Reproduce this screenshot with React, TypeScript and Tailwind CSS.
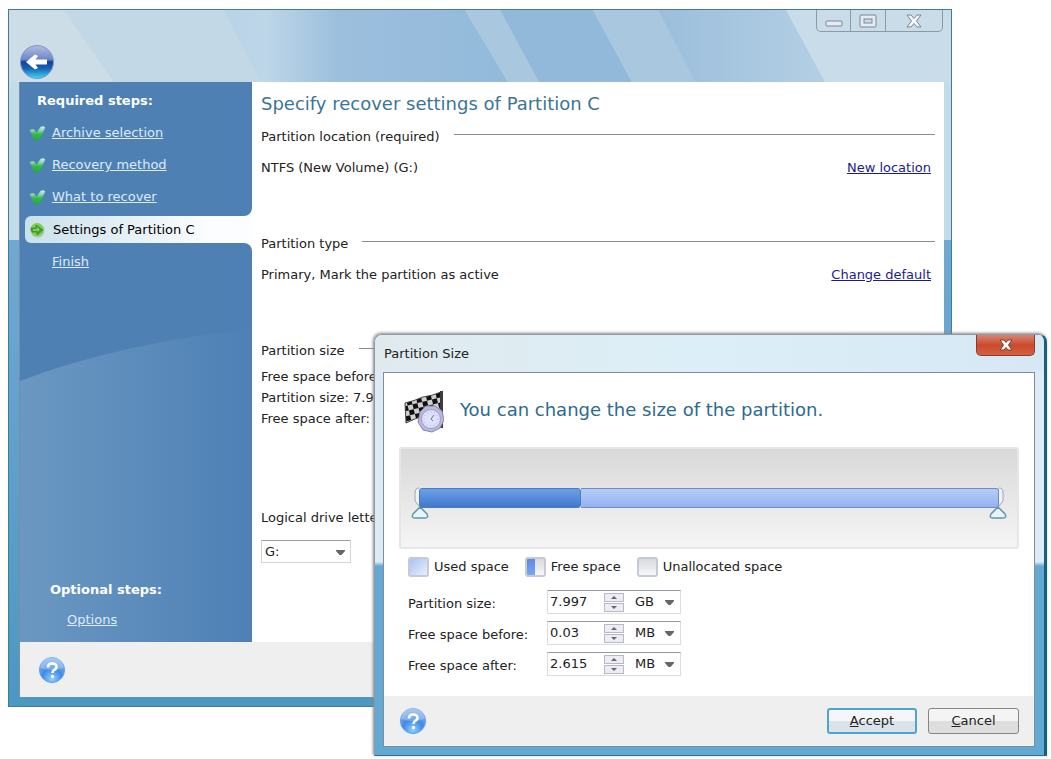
import { FC, ReactNode, useState } from 'react'

const steps = ['Archive selection', 'Recovery method', 'What to recover']

const CheckIcon = () => (
  <svg viewBox="0 0 17 17" className="h-[17px] w-[17px] shrink-0" aria-hidden="true">
    <defs>
      <linearGradient id="check" x1="0" y1="0" x2="0" y2="1">
        <stop offset="0" stopColor="#d3efe6" />
        <stop offset="0.300" stopColor="#8ed6ae" />
        <stop offset="0.550" stopColor="#35bb45" />
        <stop offset="1" stopColor="#2aa53c" />
      </linearGradient>
    </defs>
    <path d="M1 5.500 Q2.500 3.500 5 4.500 L7.500 8 L11.500 2 Q14 0.500 16 2 Q16 4.500 14.500 6 L12.500 11.500 Q11 15.500 8 15.500 Q5 15.500 4 12 L2.500 8 Q1 7 1 5.500 Z" fill="url(#check)" />
  </svg>
)

const CurrentIcon = () => (
  <svg viewBox="0 0 16 16" className="h-4 w-4 shrink-0" aria-hidden="true">
    <circle cx="8.500" cy="8.500" r="7" fill="#a9c9a2" />
    <circle cx="8" cy="7.500" r="6.500" fill="#7ccf52" />
    <path d="M2 6 H7 V3 L14 8 L8 13 V10 H3 Z" fill="#46a431" stroke="#3a8a2c" strokeWidth="0.8" />
    <path d="M4 8 H10 L8 5.500" fill="none" stroke="#b6ee92" />
  </svg>
)

const HelpIcon = () => (
  <svg viewBox="0 0 28 28" className="h-7 w-7" aria-hidden="true">
    <defs>
      <radialGradient id="help" cx="50%" cy="85%" r="80%">
        <stop offset="0" stopColor="#8fd0ff" />
        <stop offset="0.500" stopColor="#3f8be6" />
        <stop offset="1" stopColor="#8db4ea" />
      </radialGradient>
    </defs>
    <circle cx="14" cy="14" r="13.500" fill="#d5e9fb" />
    <circle cx="14" cy="14" r="12.500" fill="url(#help)" stroke="#6a9ede" />
    <path d="M2.500 12 A11.500 11.500 0 0 1 25.500 12 Q14 16 2.500 12 Z" fill="#fff" fillOpacity="0.25" />
    <path d="M10 11.500 Q10 7.500 14 7.500 Q18.500 7.500 18.500 11 Q18.500 13 16 14 Q14.500 15 14.500 17" fill="none" stroke="#fff" strokeWidth="2.600" />
    <circle cx="14.500" cy="20.500" r="1.700" fill="#fff" />
  </svg>
)

const BackIcon = () => (
  <svg viewBox="0 0 36 36" className="h-9 w-9" aria-hidden="true">
    <defs>
      <linearGradient id="back" x1="0" y1="0" x2="0" y2="1">
        <stop offset="0" stopColor="#b4bce0" />
        <stop offset="0.420" stopColor="#6d88c8" />
        <stop offset="0.500" stopColor="#123f94" />
        <stop offset="0.700" stopColor="#1765b8" />
        <stop offset="1" stopColor="#3fd8f5" />
      </linearGradient>
    </defs>
    <circle cx="18" cy="18" r="16.500" fill="url(#back)" stroke="#7f97c4" />
    <path d="M7 18 L16 10.500 L19 12 L16.500 15.500 H28 V20.500 H16.500 L19 24 L16 25.500 Z" fill="#fff" />
  </svg>
)

const FlagIcon = () => (
  <svg viewBox="0 0 40 42" className="h-[42px] w-10 shrink-0" aria-hidden="true">
    <defs>
      <pattern id="checks" width="10" height="10" patternUnits="userSpaceOnUse" patternTransform="rotate(-14)">
        <rect width="10" height="10" fill="#cfcfcf" />
        <rect width="5" height="5" fill="#111" />
        <rect x="5" y="5" width="5" height="5" fill="#111" />
      </pattern>
    </defs>
    <path d="M1 12 Q10 10 19 6 Q28 5 37 1 V20 Q28 24 19 25 Q10 28 2 32 Z" fill="url(#checks)" stroke="#444" />
    <path d="M36 0 H39 V37 H36 Z" fill="#3a3a40" />
    <path d="M16 21 L22 15 H31 L38 20 L40 29 L36 37 L28 41 L19 39 L14 31 Z" fill="#b9b9dd" stroke="#8585ac" />
    <circle cx="27" cy="28" r="9.500" fill="#dfe0fa" stroke="#9d9dc8" />
    <circle cx="27" cy="28" r="7" fill="none" stroke="#a9a9cf" strokeDasharray="1 2.600" />
    <path d="M27 28 L30 24 M27 28 L29 30" stroke="#6c6cb0" fill="none" />
  </svg>
)

const DownArrow: FC<{ className: string }> = ({ className }) => (
  <svg viewBox="0 0 9 5" className={`pointer-events-none absolute h-[5px] w-[9px] ${className}`} aria-hidden="true">
    <path d="M0 0 H9 V1 L5.500 5 H3.500 L0 1 Z" fill="#666" />
  </svg>
)

const SectionTitle: FC<{ children: ReactNode }> = ({ children }) => (
  <div className="flex h-6 items-center gap-[14px] pr-[9px]">
    <h2 className="pt-px">{children}</h2>
    <div className="mb-1 h-px flex-1 bg-[#8c8c8c]" />
  </div>
)

const SectionRow: FC<{ text: string, link: string }> = ({ text, link }) => (
  <div className="flex h-6 items-center justify-between pr-[13px]">
    <p>{text}</p>
    <a href="#" className="text-[#1c1c8c] underline">{link}</a>
  </div>
)

type AmountFieldProps = {
  id: string,
  label: string,
  value: string,
  unit: string,
  autoFocus?: boolean,
}

const AmountField: FC<AmountFieldProps> = ({ id, label, value, unit, autoFocus }) => {
  const [amount, setAmount] = useState(value)
  const change = (step: number) => setAmount((Number(amount) + step).toFixed(3))

  return (
    <div className="flex items-center">
      <label htmlFor={id} className="w-[139px] pt-1">{label}</label>
      <div className="flex h-6 items-center border border-[#dcdcdc] border-t-[#8f9aa5] bg-white">
        <input
          id={id}
          value={amount}
          autoFocus={autoFocus}
          onChange={(e) => setAmount(e.target.value)}
          className="w-14 pl-[2px] outline-none"
        />
        <div className="flex w-5 flex-col gap-px">
          <button aria-label={`Increase ${label}`} onClick={() => change(1)} className="flex h-[9px] items-center justify-center border border-[#b9b9c6] bg-[#ececf2]">
            <svg viewBox="0 0 6 3" className="h-[3px] w-[6px]"><path d="M0 3 L3 0 L6 3 Z" fill="#63637c" /></svg>
          </button>
          <button aria-label={`Decrease ${label}`} onClick={() => change(-1)} className="flex h-[9px] items-center justify-center border border-[#b9b9c6] bg-[#ececf2]">
            <svg viewBox="0 0 6 3" className="h-[3px] w-[6px]"><path d="M0 0 L3 3 L6 0 Z" fill="#63637c" /></svg>
          </button>
        </div>
        <div className="relative">
          <select aria-label={`${label} unit`} defaultValue={unit} className="w-14 appearance-none pl-[11px] outline-none">
            <option>MB</option>
            <option>GB</option>
          </select>
          <DownArrow className="top-2 right-[6px]" />
        </div>
      </div>
    </div>
  )
}

const Handle: FC<{ flip?: boolean }> = ({ flip }) => (
  <svg viewBox="0 0 20 34" className="h-[34px] w-5" aria-hidden="true">
    <path d={flip ? 'M11 1 Q15 1 15 6 V14 L11 19' : 'M9 1 Q5 1 5 6 V14 L9 19'} fill="#f1f3f8" stroke="#9aa4b4" />
    <path d="M10 20 L17 27 Q19 31 15 31 H5 Q1 31 3 27 Z" fill="#e3f6fb" stroke="#6892a8" strokeWidth="1.500" />
  </svg>
)

const Legend: FC<{ label: string, children?: ReactNode }> = ({ label, children }) => (
  <div className="flex items-center gap-[5px]">
    <div className="flex h-5 w-[21px] overflow-hidden rounded-[3px] border-2 border-[#c6cad6] bg-linear-to-b from-[#d8dade] to-[#f7f7f9]">
      {children}
    </div>
    {label}
  </div>
)

const MainWindow = () => (
  <main className="mr-[99px] ml-2 border border-[#3f7c98] bg-linear-to-b from-[#c3dcea] from-33% via-[#6fa8d3] via-33% to-[#4b98c2]">
    <header className="relative h-[72px] overflow-hidden bg-[#bcd3e6]">
      <svg viewBox="0 0 942 72" preserveAspectRatio="none" className="absolute inset-0 h-full w-full" aria-hidden="true">
        <defs>
          <linearGradient id="sheen" x1="0" y1="0" x2="1" y2="0">
            <stop offset="0" stopColor="#b9d3e7" />
            <stop offset="0.150" stopColor="#bdd6e8" />
            <stop offset="0.400" stopColor="#9cbfdd" />
            <stop offset="1" stopColor="#93badb" />
          </linearGradient>
          <linearGradient id="haze" x1="0" y1="0" x2="1" y2="0">
            <stop offset="0" stopColor="#9cbedb" />
            <stop offset="1" stopColor="#b3cfe4" />
          </linearGradient>
        </defs>
        <path d="M0 0 H55 L105 72 H0 Z" fill="#cddde8" />
        <path d="M55 0 H215 L252 72 H105 Z" fill="#c3d8e7" />
        <path d="M215 0 H456 L499 72 H252 Z" fill="url(#sheen)" />
        <path d="M456 0 H491 L530 72 H499 Z" fill="#a9c7df" />
        <path d="M491 0 H584 L623 72 H530 Z" fill="#92b9da" />
        <path d="M584 0 H649 L686 72 H623 Z" fill="#aac7e0" />
        <path d="M649 0 H777 L816 72 H686 Z" fill="url(#haze)" />
        <path d="M777 0 H942 V72 H816 Z" fill="#c9dcea" />
      </svg>
      <button aria-label="Back" className="absolute top-[34px] left-[10px]"><BackIcon /></button>
      <div className="absolute top-0 right-2 flex h-[22px] divide-x divide-[#8a9aaa] rounded-b-[5px] border border-t-0 border-[#8a9aaa] bg-[#cbdce9]">
        <button aria-label="Minimize" className="flex w-[34px] items-center justify-center">
          <svg viewBox="0 0 18 14" className="h-[14px] w-[18px]"><rect x="1" y="7" width="16" height="5" rx="1" fill="#e4edf4" stroke="#7b8494" /></svg>
        </button>
        <button aria-label="Maximize" className="flex w-[35px] items-center justify-center">
          <svg viewBox="0 0 18 14" className="h-[14px] w-[18px]"><rect x="1" y="1" width="16" height="12" rx="1" fill="#e4edf4" stroke="#7b8494" /><rect x="5" y="5" width="8" height="4" fill="#cbdce9" stroke="#7b8494" /></svg>
        </button>
        <button aria-label="Close" className="flex w-14 items-center justify-center">
          <svg viewBox="0 0 16 14" className="h-[14px] w-4"><path d="M1 1 H5 L8 4.500 L11 1 H15 L10.500 7 L15 13 H11 L8 9.500 L5 13 H1 L5.500 7 Z" fill="#f4f7fa" stroke="#7b8494" /></svg>
        </button>
      </div>
    </header>

    <div className="mr-[7px] mb-[9px] ml-[10px] border-l border-[#7a8ea0]">
      <div className="flex bg-white">
        <nav className="flex w-[232px] shrink-0 flex-col text-white">
          <div className="flex h-[134px] flex-col rounded-br-lg bg-[#4e80b4] pt-[7px]">
            <h2 className="h-[26px] pl-[17px] leading-6 font-bold">Required steps:</h2>
            {steps.map((step) => (
              <div key={step} className="flex h-8 items-center gap-[6px] pt-1 pl-[9px]">
                <CheckIcon />
                <a href="#" className="text-[#dcebf8] underline">{step}</a>
              </div>
            ))}
          </div>
          <div className="bg-linear-to-r from-[#4e80b4] from-50% to-white to-50%">
            <div className="ml-[5px] flex h-[27px] items-center gap-2 rounded-l-md bg-linear-to-r from-[#c9e0ea] to-[#fbfdfe] to-80% pl-1 text-black">
              <CurrentIcon />
              <span aria-current="step">Settings of Partition C</span>
            </div>
          </div>
          <div className="relative flex h-[399px] flex-col overflow-hidden rounded-tr-lg bg-[#4e80b4] pt-[7px] pb-3">
            <svg viewBox="0 0 232 399" preserveAspectRatio="none" className="absolute inset-0 h-full w-full" aria-hidden="true">
              <defs>
                <linearGradient id="glow" x1="0" y1="0" x2="1" y2="0">
                  <stop offset="0" stopColor="#6b98c2" />
                  <stop offset="0.800" stopColor="#5485b8" />
                  <stop offset="1" stopColor="#4e80b4" />
                </linearGradient>
              </defs>
              <path d="M0 138 Q100 100 232 86 V399 H0 Z" fill="url(#glow)" />
            </svg>
            <a href="#" className="relative pl-8 leading-6 text-[#dcebf8] underline">Finish</a>
            <h2 className="relative mt-auto h-8 pl-[30px] leading-6 font-bold">Optional steps:</h2>
            <a href="#" className="relative pl-[47px] leading-5 text-[#dcebf8] underline">Options</a>
          </div>
        </nav>

        <section className="flex-1 pt-2 pl-[9px]">
          <h1 className="h-[34px] text-[18px] leading-7 text-[#3a7596]">Specify recover settings of Partition C</h1>
          <SectionTitle>Partition location (required)</SectionTitle>
          <div className="mt-2 mb-[51px]">
            <SectionRow text="NTFS (New Volume) (G:)" link="New location" />
          </div>
          <SectionTitle>Partition type</SectionTitle>
          <div className="mt-2 mb-[51px]">
            <SectionRow text="Primary, Mark the partition as active" link="Change default" />
          </div>
          <SectionTitle>Partition size</SectionTitle>
          <div className="mt-1 leading-[21px]">
            <p>Free space before: 0.03 MB</p>
            <p>Partition size: 7.997 GB</p>
            <p>Free space after: 2.615 MB</p>
          </div>
          <div className="mt-[76px]">
            <SectionTitle><label htmlFor="drive">Logical drive letter</label></SectionTitle>
          </div>
          <div className="relative mt-[11px] w-[90px]">
            <select id="drive" defaultValue="G:" className="h-[23px] w-full appearance-none border border-[#d4d4d4] border-t-[#a0a0a0] bg-white pl-[3px]">
              <option>G:</option>
            </select>
            <DownArrow className="top-[10px] right-[6px]" />
          </div>
        </section>
      </div>
      <footer className="flex h-[55px] items-center bg-[#efefef] pl-[18px]">
        <button aria-label="Help"><HelpIcon /></button>
      </footer>
    </div>
  </main>
)

const PartitionDialog = () => (
  <div role="dialog" aria-labelledby="dialog-title" className="absolute top-[334px] right-1 left-[374px] overflow-hidden rounded-t-lg border border-r-[3px] border-[#8b9aa3] border-r-[#16607c] border-b-[#2b7090] bg-linear-to-b from-[#dcebf4] from-54% to-[#64a9d3] to-55% shadow-[-1px_-1px_3px_#888]">
    <div className="flex h-[37px] justify-between bg-linear-to-r from-[#e0eaee] via-[#dceff8] to-[#d6e8f4] pr-[9px] pl-[9px]">
      <h2 id="dialog-title" className="leading-[37px]">Partition Size</h2>
      <button aria-label="Close" className="flex h-[21px] w-[59px] items-center justify-center rounded-b-[5px] border border-t-0 border-[#8c3a2c] bg-linear-to-b from-[#d98472] via-[#c94a2c] via-50% to-[#d5603f]">
        <svg viewBox="0 0 14 12" className="h-3 w-[14px]"><path d="M1 1 H5 L7 3.500 L9 1 H13 L9.500 6 L13 11 H9 L7 8.500 L5 11 H1 L4.500 6 Z" fill="#fff" stroke="#7c3a30" /></svg>
      </button>
    </div>
    <div className="mr-[9px] mb-2 ml-2 border border-[#7d8f9b] bg-white">
      <div className="px-[15px] pt-[18px]">
        <div className="flex items-center gap-4 pl-[5px]">
          <FlagIcon />
          <h1 className="pb-1 text-[18px] leading-7 text-[#2d6a90]">You can change the size of the partition.</h1>
        </div>
        <div className="mt-[14px] h-[102px] rounded-[3px] border-2 border-[#e6e6e6] bg-linear-to-b from-[#d9d9d9] to-[#f5f5f5] px-[18px] pt-[39px]">
          <div className="relative flex h-5">
            <div className="absolute -top-px -left-[9px]"><Handle /></div>
            <div className="absolute -top-px -right-[9px]"><Handle flip /></div>
            <div className="relative w-[28%] rounded-[3px] border border-[#4a7cc4] bg-linear-to-b from-[#6da0e8] to-[#3f78cc]" />
            <div className="relative flex-1 rounded-r-[3px] border border-l-0 border-[#6d8cc4] bg-linear-to-b from-[#b5ccf8] to-[#93b3f0]" />
            <input type="range" aria-label="Partition start" defaultValue="0" className="absolute top-5 left-0 h-3 w-1/2 opacity-0" />
            <input type="range" aria-label="Partition end" defaultValue="100" className="absolute top-5 right-0 h-3 w-1/2 opacity-0" />
          </div>
        </div>
        <div className="mt-2 flex gap-4 pl-[9px]">
          <Legend label="Used space">
            <div className="w-full bg-linear-to-br from-[#a9c1f5] to-[#e9effc]" />
          </Legend>
          <Legend label="Free space">
            <div className="w-1/2 bg-linear-to-b from-[#5a8ae0] to-[#7aa4ee]" />
          </Legend>
          <Legend label="Unallocated space" />
        </div>
        <div className="mt-[13px] flex flex-col gap-[7px] pb-5 pl-[9px]">
          <AmountField id="size" label="Partition size:" value="7.997" unit="GB" autoFocus />
          <AmountField id="before" label="Free space before:" value="0.03" unit="MB" />
          <AmountField id="after" label="Free space after:" value="2.615" unit="MB" />
        </div>
      </div>
      <footer className="flex h-[50px] items-center gap-[11px] bg-[#efefef] px-[15px]">
        <button aria-label="Help" className="mr-auto"><HelpIcon /></button>
        <button className="h-[26px] w-[90px] rounded-[3px] border-2 border-[#4fa3cf] bg-linear-to-b from-[#f4f6f7] from-50% to-[#d9e3e9] to-50%">
          <span className="underline">A</span>ccept
        </button>
        <button className="h-[26px] w-[91px] rounded-[3px] border border-[#858585] bg-linear-to-b from-[#f4f4f4] from-50% to-[#dedede] to-50%">
          <span className="underline">C</span>ancel
        </button>
      </footer>
    </div>
  </div>
)

export default function App() {
  return (
    <div className="relative min-h-screen bg-white pt-[9px] pb-[52px] font-['DejaVu_Sans',sans-serif] text-[13px] leading-5 text-[#222]">
      <MainWindow />
      <PartitionDialog />
    </div>
  )
}
